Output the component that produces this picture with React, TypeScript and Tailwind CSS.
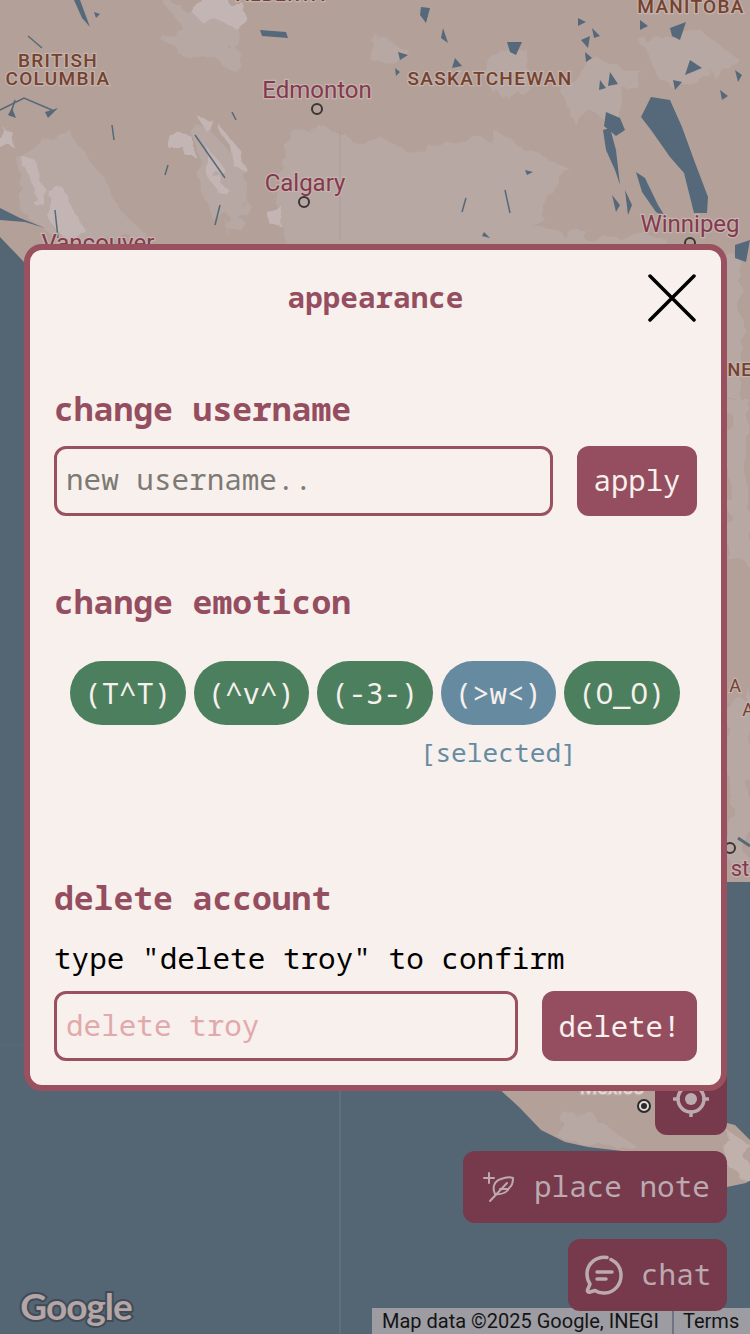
import React from 'react';

const MONO = 'font-["Noto_Sans_Mono","DejaVu_Sans_Mono",monospace]';

const emoticons = ['(T^T)', '(^v^)', '(-3-)', '(>w<)', '(O_O)'];

// lighter patches on the land
const patches = [
  '290,125 420,150 500,135 570,170 530,225 660,240 740,260 740,400 300,300 275,200',
  '345,195 400,190 430,215 380,232 345,225',
  '160,0 240,0 232,40 235,70 205,58 170,50 180,25',
  '20,160 70,130 95,170 120,210 150,238 60,240 25,215',
  '190,120 210,130 245,170 250,205 225,232 200,190',
  '560,90 600,60 640,70 620,110 575,125',
  '375,30 410,50 400,70 370,60',
  '480,70 520,40 530,75 500,100',
  '640,40 700,30 740,60 700,85 660,80',
  '727,400 750,400 750,560 727,560',
  '727,700 750,690 750,860 727,860',
];

const snow = [
  '0,125 10,130 12,145 0,150',
  '25,160 40,165 45,190 30,200',
  '48,190 70,195 85,230 60,235 45,215',
  '165,130 190,135 190,150 170,150',
  '195,115 212,120 210,135',
  '225,130 240,150 245,170 232,165',
  '262,205 285,210 280,225 268,222',
  '180,0 240,0 235,25 200,20',
  '205,145 225,170 220,195 210,175',
];

const lakes = [
  '651,97 670,100 682,127 694,160 708,197 707,213 694,213 684,173 670,157 651,130 641,117',
  '606,112 620,118 625,130 616,136 604,126',
  '603,130 610,128 616,150 620,185 615,170 606,150',
  '636,172 645,178 658,205 666,218 656,212 642,192',
  '260,30 286,32 288,38 262,36',
  '507,42 522,42 516,55 510,52',
  '421,7 430,8 426,23 420,15',
  '443,28 448,43 441,38',
  '398,52 408,55 400,60',
  '455,58 462,66 452,68',
  '395,68 400,72 396,76',
  '578,18 586,22 578,26',
  '670,28 686,22 680,40 672,36',
  '690,60 702,68 685,75',
  '673,80 682,82 675,90',
  '525,170 533,172 527,175',
  '484,232 490,238 482,236',
  '0,208 20,218 45,228 25,222 0,220',
  '74,0 80,0 90,27 82,18',
  '45,112 58,108 48,118',
  '8,115 12,108 16,118',
  '94,12 100,14 96,18',
  '581,40 590,36 588,48',
  '585,52 592,58 586,62',
  '592,28 600,36 594,38',
  '600,80 606,88 599,90',
  '610,72 618,84 608,86',
  '640,20 648,26 640,30',
  '735,70 742,75 738,82',
  '720,90 728,96 722,100',
  '612,195 620,205 616,212',
  '625,190 632,205 628,215',
];

const lakeStrokes = [
  'M28 36 L42 48',
  'M0 110 L24 98 L52 110',
  'M15 100 L10 116',
  'M112 125 L114 140',
  'M232 112 L236 120',
  'M195 135 L225 178',
  'M168 165 L165 175',
  'M220 205 L215 225',
  'M466 198 L462 212',
  'M505 190 L510 213',
  'M55 210 L58 238',
];

const mapLabels = [
  { text: 'BRITISH', x: 58, y: 67, size: 19, color: '#74422e', spacing: 1.3 },
  { text: 'COLUMBIA', x: 58, y: 85, size: 19, color: '#74422e', spacing: 1.3 },
  { text: 'SASKATCHEWAN', x: 490, y: 85, size: 19, color: '#74422e', spacing: 1.3 },
  { text: 'MANITOBA', x: 691, y: 13, size: 19, color: '#74422e', spacing: 1.3 },
  { text: 'ALBERTA', x: 281, y: 1, size: 19, color: '#74422e', spacing: 1.3 },
  { text: 'Edmonton', x: 317, y: 98, size: 24, color: '#85394e', spacing: 0 },
  { text: 'Calgary', x: 305, y: 191, size: 24, color: '#85394e', spacing: 0 },
  { text: 'Winnipeg', x: 690, y: 232, size: 24, color: '#85394e', spacing: 0 },
  { text: 'Vancouver', x: 98, y: 251, size: 24, color: '#85394e', spacing: 0 },
  { text: 'NE', x: 740, y: 376, size: 18, color: '#74422e', spacing: 1 },
  { text: 'A', x: 735, y: 692, size: 18, color: '#74422e', spacing: 0 },
  { text: 'A', x: 748, y: 716, size: 18, color: '#74422e', spacing: 0 },
  { text: 'st', x: 740, y: 876, size: 22, color: '#85394e', spacing: 0 },
  { text: 'Mexico', x: 612, y: 1094, size: 20, color: '#e8dcd8', spacing: 0 },
];

function MapBackdrop() {
  return (
    <svg className="absolute inset-0" width="750" height="1334" viewBox="0 0 750 1334">
      <defs>
        <filter id="blotchy" x="-10%" y="-10%" width="120%" height="120%">
          <feTurbulence type="fractalNoise" baseFrequency="0.035" numOctaves="3" seed="4" />
          <feDisplacementMap in="SourceGraphic" scale="34" />
          <feGaussianBlur stdDeviation="0.6" />
        </filter>
        <filter id="soft" x="-10%" y="-10%" width="120%" height="120%">
          <feGaussianBlur stdDeviation="0.5" />
        </filter>
      </defs>
      <rect width="750" height="1334" fill="#546573" />
      <g filter="url(#soft)">
        <polygon points="0,0 750,0 750,882 727,882 727,300 24,262 0,237" fill="#b3a099" />
        <polygon points="24,250 727,250 727,882 24,882" fill="#b3a099" />
        <polygon
          points="495,1085 520,1108 541,1130 565,1142 588,1147 622,1151 727,1187 746,1183 750,1180 750,1140 735,1125 727,1123 727,1085"
          fill="#b3a099"
        />
      </g>
      <g filter="url(#blotchy)">
        {patches.map((p, i) => (
          <polygon key={i} points={p} fill="#b8a8a3" />
        ))}
        {snow.map((p, i) => (
          <polygon key={i} points={p} fill="#c3b5b3" />
        ))}
        <polygon points="560,1110 600,1120 640,1150 560,1140" fill="#b8a8a3" />
        <polygon points="727,1130 750,1145 750,1175 730,1170" fill="#c0b1ac" />
      </g>
      <g filter="url(#soft)">
        {lakes.map((p, i) => (
          <polygon key={i} points={p} fill="#56697a" />
        ))}
        {lakeStrokes.map((d, i) => (
          <path key={i} d={d} stroke="#56697a" strokeWidth="1.500" fill="none" />
        ))}
        <polygon points="735,245 750,240 746,262 735,258" fill="#56697a" />
        <path d="M738 838 L750 846" stroke="#56697a" strokeWidth="3" fill="none" />
      </g>

      {/* tile seams */}
      <path d="M340 1085 V1334" stroke="#64717f" strokeWidth="1.500" fill="none" />
      <path d="M0 1045 H24" stroke="#5c6c7a" strokeWidth="1" fill="none" />
      <path d="M340 130 V240" stroke="#ab9a96" strokeWidth="1" fill="none" />

      {mapLabels.map((l) => (
        <text
          key={l.text + l.x}
          x={l.x}
          y={l.y}
          textAnchor="middle"
          fontFamily="Roboto, sans-serif"
          fontSize={l.size}
          fontWeight={l.spacing ? 500 : 400}
          letterSpacing={l.spacing}
          fill={l.color}
          stroke="#c4b3ae"
          strokeWidth="2.500"
          paintOrder="stroke"
        >
          {l.text}
        </text>
      ))}

      {/* city dots */}
      <circle cx="317" cy="109" r="5" fill="none" stroke="#3b3533" strokeWidth="2" />
      <circle cx="304" cy="202" r="5" fill="none" stroke="#3b3533" strokeWidth="2" />
      <circle cx="690" cy="243" r="5" fill="none" stroke="#3b3533" strokeWidth="2" />
      <circle cx="730" cy="848" r="5" fill="none" stroke="#3b3533" strokeWidth="2" />
      <circle cx="644" cy="1106" r="6" fill="#e4dad6" stroke="#2b2b2b" strokeWidth="2" />
      <circle cx="644" cy="1106" r="3" fill="#2b2b2b" />

      <text
        x="76"
        y="1320"
        textAnchor="middle"
        fontFamily="Lato, sans-serif"
        fontSize="37"
        fontWeight="700"
        letterSpacing="-1"
        fill="#b5a5a4"
        stroke="#3f4c58"
        strokeWidth="4"
        paintOrder="stroke"
      >
        Google
      </text>
    </svg>
  );
}

function LocateIcon() {
  return (
    <svg width="36" height="36" viewBox="0 0 36 36" fill="none" stroke="#bcaab0" strokeWidth="3.500" strokeLinecap="round">
      <circle cx="18" cy="18" r="13" />
      <circle cx="18" cy="18" r="6" fill="#bcaab0" stroke="none" />
      <path d="M18 1v4M18 31v4M1 18h4M31 18h4" />
    </svg>
  );
}

function FeatherPlusIcon() {
  return (
    <svg width="34" height="34" viewBox="0 0 34 34" fill="none" stroke="#bcaab0" strokeWidth="2" strokeLinecap="round" strokeLinejoin="round">
      <path d="M2 8h10M7 3v10" />
      <path d="M8 31 L25 13" />
      <path d="M13 24c-3-6-1-13 6-15 4-1.500 9-2 12-1 0 4-1 8-4 10-1 3-5 7-14 6z" />
      <path d="M18 19h7" />
    </svg>
  );
}

function ChatIcon() {
  return (
    <svg width="38" height="40" viewBox="0 0 38 40" fill="none" stroke="#bcaab0" strokeWidth="3.500" strokeLinecap="round" strokeLinejoin="round">
      <path d="M22 2.500C11 1 2 9 2 19c0 4 1 7 3 10l-2.500 6c-.5 1.500 1 2.500 2.500 2l5-1.500c3 2 6 3 10 2.500 9-.5 16-8 16-17.500 0-7-4-13-10-16" />
      <path d="M12 17h15M12 24h9" />
    </svg>
  );
}

function MapButton({ children, className }: { children: React.ReactNode; className: string }) {
  return (
    <div className={`flex h-[72px] items-center rounded-xl bg-[#763a4c] text-[#bcaab0] text-[29.300px] ${className}`}>
      {children}
    </div>
  );
}

export default function App() {
  return (
    <div className={`relative h-[1334px] w-[750px] overflow-hidden bg-[#546573] ${MONO}`}>
      <MapBackdrop />

      <div className="absolute right-0 bottom-0 flex h-[26px] w-[378px] items-center bg-[#9d9ca2] font-['Roboto',sans-serif] text-[20px] text-[#141414]">
        <span className="w-[300px] pl-[10px]">Map data ©2025 Google, INEGI</span>
        <span className="border-l-2 border-[#6f7580] pl-[9px]">Terms</span>
      </div>

      {/* map controls, partly under the dialog */}
      <div className="absolute right-[23px] bottom-[23px] flex flex-col items-end gap-4">
        <MapButton className="w-[72px] justify-center">
          <LocateIcon />
        </MapButton>
        <MapButton className="w-[264px] gap-[18px] pl-[19px]">
          <FeatherPlusIcon />
          <span>place note</span>
        </MapButton>
        <MapButton className="w-[159px] gap-[18px] pl-[17px]">
          <ChatIcon />
          <span>chat</span>
        </MapButton>
      </div>

      {/* dialog */}
      <div className="absolute top-[244px] left-[24px] flex w-[703px] flex-col rounded-[18px] border-[6px] border-[#99505f] bg-[#f8f0ed] px-6 pb-6">
        <div className="relative flex h-[100px] items-center justify-center pb-1">
          <h1 className="text-[29.300px] font-bold text-[#954e60]">appearance</h1>
          <button className="absolute top-[24px] right-[1px] h-[48px] w-[48px]">
            <svg width="48" height="48" viewBox="0 0 48 48" stroke="#000" strokeWidth="3.500" strokeLinecap="round">
              <path d="M2 2 L46 46 M46 2 L2 46" />
            </svg>
          </button>
        </div>

        <h2 className="mt-[39px] text-[33px] leading-[40px] font-bold text-[#954e60]">change username</h2>
        <div className="mt-[17px] flex gap-6">
          <input
            placeholder="new username.."
            className="h-[70px] min-w-0 flex-1 rounded-xl border-[3px] border-[#99505f] bg-transparent px-[9px] pb-1 text-[29.300px] placeholder:text-[#7c7a74]"
          />
          <button className="h-[70px] w-[120px] rounded-xl bg-[#954e60] pb-[2px] text-[29px] text-[#f8f0ed]">apply</button>
        </div>

        <h2 className="mt-[66px] text-[33px] leading-[40px] font-bold text-[#954e60]">change emoticon</h2>
        <div className="mt-[39px] flex justify-center gap-2 pr-[1.500px]">
          {emoticons.map((e) => (
            <div key={e} className="relative">
              <button
                className={`h-[64px] w-[115.500px] rounded-[32px] text-[29px] text-[#f8f0ed] ${
                  e === '(>w<)' ? 'bg-[#668ba1]' : 'bg-[#4b7f5e]'
                }`}
              >
                {e}
              </button>
              {e === '(>w<)' && (
                <span className="absolute top-[75px] left-1/2 -translate-x-1/2 text-[26.200px] leading-[32px] text-[#668ba1]">
                  [selected]
                </span>
              )}
            </div>
          ))}
        </div>

        <h2 className="mt-[153px] text-[33px] leading-[40px] font-bold text-[#954e60]">delete account</h2>
        <p className="mt-[20px] text-[29.350px] leading-[40px] text-black">type "delete troy" to confirm</p>
        <div className="mt-[13px] flex gap-6">
          <input
            placeholder="delete troy"
            className="h-[70px] min-w-0 flex-1 rounded-xl border-[3px] border-[#99505f] bg-transparent px-[9px] pb-[2px] text-[29.300px] placeholder:text-[#e1a9ab]"
          />
          <button className="h-[70px] w-[155px] rounded-xl bg-[#954e60] text-[29px] text-[#f8f0ed]">delete!</button>
        </div>
      </div>
    </div>
  );
}
